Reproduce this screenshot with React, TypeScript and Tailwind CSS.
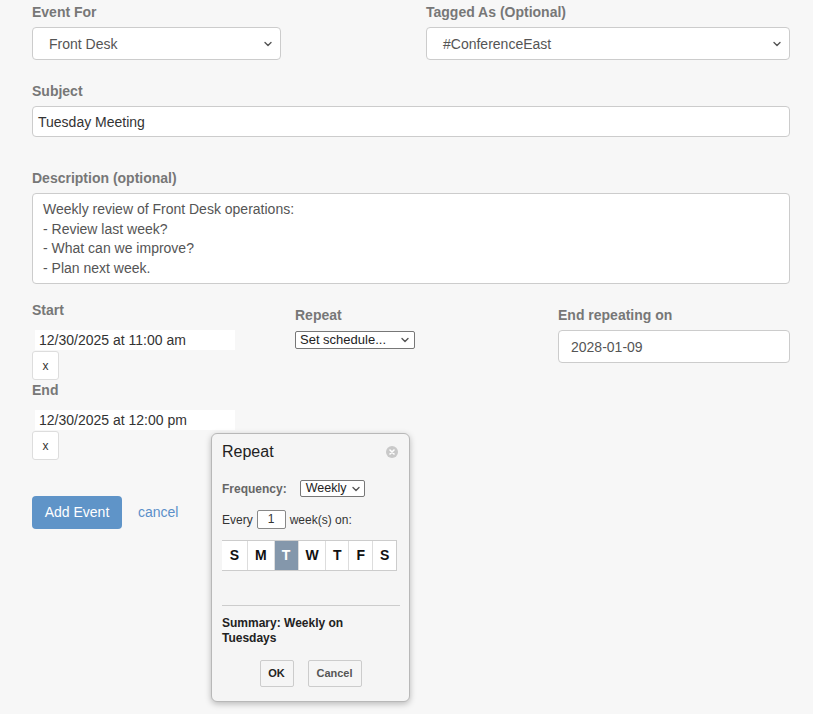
import React from "react";

const font = { fontFamily: '"Liberation Sans", Arial, Helvetica, sans-serif' };

function Chevron({ right = "right-[7px]" }: { right?: string }) {
  return (
    <svg width="10" height="10" viewBox="0 0 10 10" className={"absolute top-1/2 -translate-y-1/2 " + right}>
      <path d="M2 3.5 L5 6.5 L8 3.5" fill="none" stroke="#555" strokeWidth="1.4" strokeLinecap="round" strokeLinejoin="round" />
    </svg>
  );
}

function Label({ children, className = "" }: { children: React.ReactNode; className?: string }) {
  return <div className={"text-[14px] leading-[20px] font-bold text-[#777] " + className}>{children}</div>;
}

export default function App() {
  const days = [
    { d: "S", w: "w-[25px]" },
    { d: "M", w: "w-[27px]" },
    { d: "T", w: "w-[24px]", sel: true },
    { d: "W", w: "w-[28px]" },
    { d: "T", w: "w-[23px]" },
    { d: "F", w: "w-[24px]" },
    { d: "S", w: "w-[24px]" },
  ];
  return (
    <div style={font} className="relative min-h-[714px] w-[813px] bg-[#f7f7f7] pl-[32px] pr-[23px] pt-[2px] text-[#333]">
      {/* row 1 */}
      <div className="flex">
        <div className="w-[394px]">
          <Label className="mb-[5px]">Event For</Label>
          <div className="relative h-[33px] w-[249px] rounded-[4px] border border-[#ccc] bg-white pl-[16px] text-[14px] leading-[32px] text-[#555]">
            Front Desk
            <Chevron />
          </div>
        </div>
        <div className="flex-1">
          <Label className="mb-[5px]">Tagged As (Optional)</Label>
          <div className="relative h-[33px] w-full rounded-[4px] border border-[#ccc] bg-white pl-[16px] text-[14px] leading-[32px] text-[#555]">
            #ConferenceEast
            <Chevron />
          </div>
        </div>
      </div>

      {/* subject */}
      <Label className="mt-[21px] mb-[5px]">Subject</Label>
      <div className="h-[31px] w-full rounded-[4px] border border-[#ccc] bg-white pl-[5px] text-[14px] leading-[30px] text-[#333]">
        Tuesday Meeting
      </div>

      {/* description */}
      <Label className="mt-[31px] mb-[5px]">Description (optional)</Label>
      <div className="h-[91px] w-full rounded-[4px] border border-[#ccc] bg-white pl-[10px] pt-[6px] text-[14px] leading-[19.5px] text-[#555]">
        <div>Weekly review of Front Desk operations:</div>
        <div>- Review last week?</div>
        <div>- What can we improve?</div>
        <div>- Plan next week.</div>
      </div>

      {/* row 3 */}
      <div className="mt-[16px] grid grid-cols-[232px_232px_232px] gap-x-[31px]">
        <div>
          <Label className="mb-[10px]">Start</Label>
          <div className="ml-[3px] h-[20px] w-[200px] bg-white pl-[4px] text-[14px] leading-[20px] text-[#333]">12/30/2025 at 11:00 am</div>
          <div className="mt-[1px] flex h-[29px] w-[27px] items-center justify-center rounded-[3px] border border-[#ddd] bg-white text-[12px] text-[#333]">x</div>
          <Label className="mb-[10px]">End</Label>
          <div className="ml-[3px] h-[20px] w-[200px] bg-white pl-[4px] text-[14px] leading-[20px] text-[#333]">12/30/2025 at 12:00 pm</div>
          <div className="mt-[1px] flex h-[29px] w-[27px] items-center justify-center rounded-[3px] border border-[#ddd] bg-white text-[12px] text-[#333]">x</div>
        </div>
        <div className="pt-[5px]">
          <Label className="mb-[6px]">Repeat</Label>
          <div className="relative h-[18px] w-[120px] rounded-[2px] border border-[#777] bg-white pl-[4px] text-[13px] leading-[16px] text-[#222]">
            Set schedule...
            <Chevron right="right-[4px]" />
          </div>
        </div>
        <div className="pt-[5px]">
          <Label className="mb-[5px]">End repeating on</Label>
          <div className="h-[33px] w-full rounded-[4px] border border-[#ccc] bg-white pl-[12px] text-[14px] leading-[32px] text-[#555]">2028-01-09</div>
        </div>
      </div>

      {/* buttons */}
      <div className="mt-[36px] flex items-center">
        <div className="flex h-[33px] w-[90px] items-center justify-center rounded-[4px] bg-[#5f94c8] text-[14px] text-white">Add Event</div>
        <div className="ml-[16px] text-[14px] text-[#5b8fc9]">cancel</div>
      </div>

      {/* popup */}
      <div className="absolute left-[211px] top-[433px] h-[269px] w-[199px] rounded-[6px] border border-[#b8b8b8] bg-[#f5f5f5] px-[10px] shadow-[0_2px_6px_rgba(0,0,0,0.25)]">
        <div className="relative mt-[7px] h-[22px] text-[16px] leading-[22px] text-[#222]">
          Repeat
          <div className="absolute right-[1px] top-[5px] flex h-[12px] w-[12px] items-center justify-center rounded-full bg-[#c9c9c9]">
            <svg width="8" height="8" viewBox="0 0 8 8">
              <path d="M2 2 L6 6 M6 2 L2 6" stroke="#fff" strokeWidth="1.6" strokeLinecap="round" />
            </svg>
          </div>
        </div>
        <div className="mt-[17px] flex h-[17px] items-center">
          <span className="text-[12px] font-bold text-[#666]">Frequency:</span>
          <div className="relative ml-[13px] h-[17px] w-[65px] rounded-[2px] border border-[#777] bg-white pl-[5px] text-[12.5px] leading-[15px] text-[#222]">
            Weekly
            <Chevron right="right-[3px]" />
          </div>
        </div>
        <div className="mt-[13px] flex h-[19px] items-center text-[12px] text-[#333]">
          <span>Every</span>
          <div className="ml-[4px] h-[19px] w-[29px] rounded-[2px] border border-[#888] bg-white text-center text-[12px] leading-[17px]">1</div>
          <span className="ml-[4px]">week(s) on:</span>
        </div>
        <div className="mt-[11px] flex h-[31px] w-[175px] border-y border-r border-[#ccc]">
          {days.map((x, i) => (
            <div
              key={i}
              className={
                x.w +
                " flex h-full items-center justify-center text-[14px] font-bold " +
                (i > 0 ? "border-l border-[#ddd] " : "") +
                (x.sel ? "bg-[#8497ab] text-white" : "bg-white text-[#111]")
              }
            >
              {x.d}
            </div>
          ))}
        </div>
        <div className="mt-[34px] h-px w-[178px] bg-[#ccc]" />
        <div className="mt-[10px] w-[150px] text-[12px] font-bold leading-[15px] text-[#222]">Summary: Weekly on Tuesdays</div>
        <div className="mt-[14px] flex justify-center gap-[14px]">
          <div className="flex h-[27px] w-[34px] items-center justify-center rounded-[2px] border border-[#ccc] bg-[#f5f5f5] text-[11px] font-bold text-[#222]">OK</div>
          <div className="flex h-[27px] w-[54px] items-center justify-center rounded-[2px] border border-[#ccc] bg-[#f5f5f5] text-[11px] font-bold text-[#555]">Cancel</div>
        </div>
      </div>
    </div>
  );
}
